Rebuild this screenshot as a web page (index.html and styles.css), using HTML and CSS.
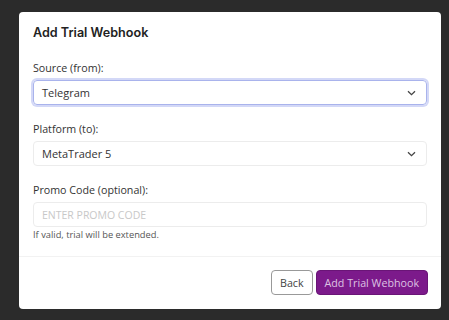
FILE: index.html
```html
<!DOCTYPE html>
<html lang="en">
<head>
  <meta charset="UTF-8">
  <title>Add Trial Webhook</title>
  <link rel="stylesheet" href="styles.css">
</head>
<body>
  <div class="modal">
    <div class="modal-header">
      <h2>Add Trial Webhook</h2>
    </div>
    <div class="modal-body">
      <div class="form-group">
        <label>Source (from):</label>
        <div class="select focused">
          <span>Telegram</span>
          <svg class="chevron" width="9" height="6" viewBox="0 0 9 6"><path d="M1 1.2 L4.5 4.6 L8 1.2" fill="none" stroke="#444" stroke-width="1.3"/></svg>
        </div>
      </div>
      <div class="form-group">
        <label>Platform (to):</label>
        <div class="select">
          <span>MetaTrader 5</span>
          <svg class="chevron" width="9" height="6" viewBox="0 0 9 6"><path d="M1 1.2 L4.5 4.6 L8 1.2" fill="none" stroke="#444" stroke-width="1.3"/></svg>
        </div>
      </div>
      <div class="form-group last">
        <label>Promo Code (optional):</label>
        <input class="input" type="text" placeholder="ENTER PROMO CODE">
        <small>If valid, trial will be extended.</small>
      </div>
    </div>
    <div class="modal-footer">
      <button class="btn btn-back">Back</button>
      <button class="btn btn-primary">Add Trial Webhook</button>
    </div>
  </div>
</body>
</html>
```

FILE: styles.css
```css
body {
  margin: 0;
  padding: 12px 0 0 19px;
  background-color: #2b2b2b;
  font-family: "Open Sans", Arial, sans-serif;
  color: #333;
  height: 320px;
  box-sizing: border-box;
  overflow: hidden;
}
.modal {
  width: 422px;
  background-color: #fff;
  border-radius: 4px;
}
.modal-header {
  padding: 11px 14px 0;
}
.modal-header h2 {
  margin: 0;
  font-family: "Inter", "Noto Sans", sans-serif;
  font-size: 12.6px;
  font-weight: 600;
  line-height: 20px;
  color: #222;
}
.modal-body {
  padding: 17px 14px 15px;
}
.form-group {
  margin-bottom: 16px;
}
.form-group.last {
  margin-bottom: 0;
}
.form-group label {
  display: block;
  font-size: 10.7px;
  line-height: 16px;
  margin-bottom: 4px;
  color: #333;
}
.select {
  height: 25px;
  box-sizing: border-box;
  border: 1px solid #ececec;
  border-radius: 4px;
  display: flex;
  align-items: center;
  justify-content: space-between;
  padding: 0 10px 0 8px;
  font-size: 11px;
  color: #333;
}
.select.focused {
  border-color: #a9b3ec;
  box-shadow: 0 0 0 2px #d3d8f7;
}
.chevron {
  display: block;
}
.input {
  display: block;
  width: 100%;
  height: 25px;
  box-sizing: border-box;
  border: 1px solid #ececec;
  border-radius: 4px;
  padding: 0 8px;
  font-family: "Open Sans", Arial, sans-serif;
  font-size: 10.5px;
  outline: none;
}
.input::placeholder {
  color: #c8c8c8;
}
.form-group small {
  display: block;
  margin-top: 2px;
  font-size: 9.3px;
  line-height: 12px;
  color: #555;
}
.modal-footer {
  border-top: 1px solid #f2f2f2;
  padding: 13px 13px 14px 14px;
  display: flex;
  justify-content: flex-end;
  gap: 3px;
}
.btn {
  height: 25px;
  box-sizing: border-box;
  border-radius: 4px;
  font-family: "Open Sans", Arial, sans-serif;
  font-size: 10.7px;
  padding: 0 8px;
  cursor: pointer;
}
.btn-back {
  background-color: #fff;
  border: 1px solid #999;
  color: #444;
}
.btn-primary {
  background-color: #7c1a8b;
  border: 1px solid #6a1577;
  color: #dcc2e2;
}
```
